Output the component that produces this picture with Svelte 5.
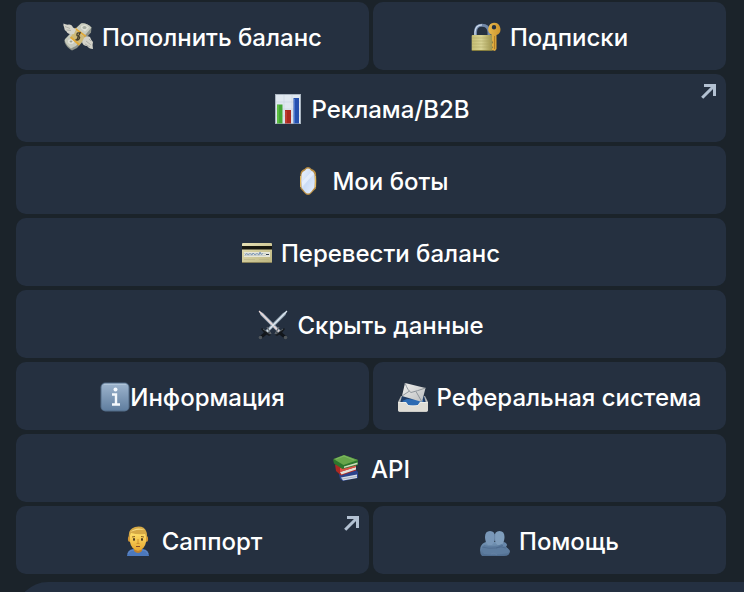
<script lang="ts">
  type KeyboardButton = {
    icon: string;
    text: string;
    href?: string;
    tight?: boolean;
  };

  const rows: KeyboardButton[][] = [
    [
      { icon: 'money', text: 'Пополнить баланс' },
      { icon: 'lock', text: 'Подписки' }
    ],
    [{ icon: 'chart', text: 'Реклама/B2B', href: '#ads' }],
    [{ icon: 'mirror', text: 'Мои боты' }],
    [{ icon: 'card', text: 'Перевести баланс' }],
    [{ icon: 'swords', text: 'Скрыть данные' }],
    [
      { icon: 'info', text: 'Информация', tight: true },
      { icon: 'mail', text: 'Реферальная система' }
    ],
    [{ icon: 'books', text: 'API' }],
    [
      { icon: 'man', text: 'Саппорт', href: '#support' },
      { icon: 'people', text: 'Помощь' }
    ]
  ];
</script>

<!-- shared gradients for the emoji -->
<svg class="defs" width="0" height="0" aria-hidden="true">
  <defs>
    <linearGradient id="gold" x1="0" y1="0" x2="1" y2="0">
      <stop offset="0" stop-color="#c5bd72" />
      <stop offset="0.45" stop-color="#d8d394" />
      <stop offset="1" stop-color="#9c9148" />
    </linearGradient>
    <linearGradient id="key" x1="0" y1="0" x2="1" y2="0">
      <stop offset="0" stop-color="#e7b84c" />
      <stop offset="1" stop-color="#cf962d" />
    </linearGradient>
    <linearGradient id="glass" x1="0" y1="0" x2="1" y2="1">
      <stop offset="0" stop-color="#edf4ff" />
      <stop offset="0.5" stop-color="#cbdcf5" />
      <stop offset="1" stop-color="#e5efff" />
    </linearGradient>
    <linearGradient id="plastic" x1="0" y1="0" x2="1" y2="1">
      <stop offset="0" stop-color="#e5dfb4" />
      <stop offset="1" stop-color="#bdb57e" />
    </linearGradient>
    <linearGradient id="badge" x1="0" y1="0" x2="0" y2="1">
      <stop offset="0" stop-color="#9db4cd" />
      <stop offset="1" stop-color="#607e9f" />
    </linearGradient>
    <linearGradient id="paper" x1="0" y1="0" x2="1" y2="1">
      <stop offset="0" stop-color="#f0f0ee" />
      <stop offset="1" stop-color="#b9bbbd" />
    </linearGradient>
    <linearGradient id="face" x1="0" y1="0" x2="0" y2="1">
      <stop offset="0" stop-color="#ffdf69" />
      <stop offset="1" stop-color="#e5a52e" />
    </linearGradient>
    <linearGradient id="shadow" x1="0" y1="0" x2="0" y2="1">
      <stop offset="0" stop-color="#7393b4" />
      <stop offset="1" stop-color="#506d90" />
    </linearGradient>
  </defs>
</svg>

{#snippet emoji(name: string)}
  <svg class="emoji" viewBox="0 0 30 30" aria-hidden="true">
    {#if name === 'money'}
      <path d="M7 12 18 1.5Q23 .5 28.5 5.5L28 10.5 14 26 9 28.5Q3 25 1.5 20L2 17Z" fill="#8e938a" />
      <path d="M7 12 18 1.5Q23 .5 28.5 5.5L13 24Q10 25 8 26.5 3 23 1.5 18Z" fill="#c8cbbd" />
      <path d="m18 4 4-1.5 4 3-4 4-4-3Z" fill="#dedfd3" />
      <ellipse cx="21.5" cy="5.5" rx="2" ry="1.6" fill="#a6aca0" />
      <ellipse cx="8" cy="19.5" rx="3" ry="2.3" fill="#e4e5dc" />
      <ellipse cx="8" cy="19.5" rx="1.4" ry="1" fill="#9ba192" />
      <path d="m11 7.5 11.5 8-6 7.5L8 15Z" fill="#cdb978" />
      <path d="m12 6.5 11 8M7.5 15l9 8" stroke="#e2a936" stroke-width="1.7" />
      <path d="M17.5 11.5q-3-1.5-3.5.5t1.5 2.5.5 2.5-3.5.5M17.5 10l-4 8.5" fill="none" stroke="#423c2c" stroke-width="1.3" />
      <path d="M11 12Q5 13 3.5 9.5 1 8 1 5 0 3 .5 1.5 3 3 6 2.5q3 0 4 3l3 1.5Z" fill="#d5d4ca" />
      <path d="m2 4.5 5 2M3.5 8 8 8.5" stroke="#a6a79f" stroke-width=".8" />
      <path d="M21 16q3-3 6-1 1 3 3 5-1 3 0 7-4 0-6-3-4 0-5-4Z" fill="#d3d2c8" />
      <path d="m23 19 5 4m-2-6 2 2m-6 3 5 3" stroke="#a3a59e" stroke-width=".8" />
    {:else if name === 'lock'}
      <path d="M4.5 15V10Q4.5 3.2 11 3.2T18 10v5" fill="none" stroke="#7187a8" stroke-width="3" />
      <path d="M4 14V10Q4.5 3 11 2.8" fill="none" stroke="#cbd9eb" stroke-width="1.3" />
      <rect x=".7" y="13" width="21" height="16" rx="1" fill="url(#gold)" />
      <path d="M1 16h20M1 19h20M1 22h20M1 25h20" stroke="#aaa262" stroke-width=".5" />
      <path d="M1 28.5h20" stroke="#857d3e" />
      <path d="M23 .8a6.4 6.4 0 0 1 2.5 12.3V27L24 29l-3-1v-1.5l1-1-1-1.5V22l1-1.5-1-2V13A6.4 6.4 0 0 1 23 .8Zm0 2.2a2.2 2.2 0 1 0 0 4.4A2.2 2.2 0 0 0 23 3Z" fill="url(#key)" fill-rule="evenodd" />
      <path d="M23.5 14v13" stroke="#aa731f" stroke-width=".8" />
    {:else if name === 'chart'}
      <rect x="2" width="26" height="30" fill="#aab5c1" />
      <rect x="3" y="1" width="24" height="28" fill="#e0e8f0" />
      <path d="M11 1v28M19 1v28M3 8h24M3 15h24M3 22h24" stroke="#cbd5e0" stroke-width=".6" />
      <rect x="4" y="10.5" width="5.5" height="19" fill="#43a735" />
      <rect x="12" y="16" width="6" height="13.5" fill="#ab281f" />
      <rect x="20.5" y="4" width="5.5" height="25.5" fill="#2550ae" />
      <path d="M5 11v18" stroke="#76d051" />
      <path d="M13 17v12" stroke="#cd5045" />
      <path d="M21.5 5v24" stroke="#4c78cf" />
    {:else if name === 'mirror'}
      <path d="M15 1q2 0 3.500 2 4 1 4.500 4.500.8 7.500 0 15Q21 24 18.500 27 17 29 15 29t-3.500-2Q9 24 7.500 22.500q-.8-7.500 0-15Q8 4 11.500 3 13 1 15 1Z" fill="#b98d42" />
      <path d="M15 2.500q2 0 3 2 3 1 3.500 4 .6 6.500 0 13L18 26q-1.500 1.500-3 1.500T12 26l-3.500-4.500q-.6-6.500 0-13Q9 5.500 12 4.500q1-2 3-2Z" fill="url(#glass)" />
      <path d="m9 16 10-11 2 3L9 21Z" fill="#f4f8ff" opacity=".55" />
      <path d="M7.5 10v11M22.5 10v11" stroke="#e5b95c" />
    {:else if name === 'card'}
      <rect y="5" width="30" height="20" rx="1" fill="url(#plastic)" />
      <path d="M0 8h30v3.5H0Z" fill="#17170f" />
      <rect x="2" y="14" width="26" height="5" fill="#e6e6da" />
      <path d="M2 15.5h22M2 17.5h22" stroke="#b8c1be" stroke-width=".6" />
      <path d="m3 17 2-1.5 1 1.5 2-1.5 2 1.5 1-2 2 2 2-1.5 2 1.5 1-3 1 2.5 2-1" fill="none" stroke="#7590b5" stroke-width=".9" />
      <path d="M24 16.5h3" stroke="#354052" />
      <path d="M0 24.5h30" stroke="#89825a" />
      <path d="M2 21.5h11m4 0h10" stroke="#b3ac82" stroke-width=".5" />
    {:else if name === 'swords'}
      <path d="m1 1 4 2 18 18-2.5 2L2.5 5Z" fill="#a7b5c4" />
      <path d="m29 1-4 2L7 21l2.5 2L27.5 5Z" fill="#97a6b5" />
      <path d="m1 1 20.5 21" stroke="#f0dbd9" stroke-width="1.1" />
      <path d="M29 1 8.5 22" stroke="#dfeaf2" stroke-width="1.1" />
      <path d="m9 17 4 7m8-7-4 7" stroke="#666b70" stroke-width="1.2" />
      <path d="m4 18 9 7-2 1-5-3-3-4Z" fill="#171b20" />
      <path d="m26 18-9 7 2 1 5-3 3-4Z" fill="#171b20" />
      <path d="m8 23-5.5 4.5M22 23l5.5 4.5" stroke="#12161b" stroke-width="3" />
      <circle cx="2.5" cy="27.5" r="1.8" fill="#50565b" />
      <circle cx="27.5" cy="27.5" r="1.8" fill="#50565b" />
      <path d="m5 19 7 5m13-5-7 5" stroke="#777c80" stroke-width=".7" />
    {:else if name === 'info'}
      <rect x=".5" y=".5" width="29" height="29" rx="5" fill="#526b86" />
      <rect x="1.5" y="1.5" width="27" height="27" rx="4" fill="url(#badge)" />
      <path d="M4 2.3h22" stroke="#bdcee0" stroke-width=".8" />
      <circle cx="15.5" cy="7.5" r="2" fill="#f4f8fc" />
      <path d="M12 12.5h4v10M12 22.5h8" fill="none" stroke="#f4f8fc" stroke-width="2.4" />
    {:else if name === 'mail'}
      <path d="M3 14h24l3 6v8q0 1.700-1.700 1.700H1.700Q0 29.700 0 28v-8Z" fill="#b6b8b8" />
      <path d="m4 14h22l2 7H2Z" fill="#203c65" />
      <path d="m4 19 5-2 16 1 1 3-7 3h-8Z" fill="#2d6bb3" />
      <path d="M7 1 27.500 6 24 20 4 14Z" fill="url(#paper)" />
      <path d="M7 1q3 8 6 9.500Q19 9 27.500 6M4 14l7.500-5M24 20l-6-10.500" fill="none" stroke="#888f95" stroke-width=".9" />
      <path d="M0 20h8l2 3q5 1 10 0l2-3h8v8q0 1.700-1.700 1.700H1.700Q0 29.700 0 28Z" fill="#dfddd6" />
      <path d="M.5 20.500H8l2 3q5 1 10 0l2-3h7.500" fill="none" stroke="#f4f3ef" stroke-width=".7" />
    {:else if name === 'books'}
      <path d="m7 20 16-5 3 3v6L11 27l-3-2Z" fill="#2b438c" />
      <path d="m9 23.5 16-3v3.5l-14 2.5Z" fill="#d7dce5" />
      <path d="m10 25 15-2.5" stroke="#8792ac" stroke-width=".6" />
      <path d="M3 10.5 24 8v8.5L9 21.5 4 17Z" fill="#ad2923" />
      <path d="m8 18 16-5v2.5L9.5 20.5Z" fill="#e3dfd7" />
      <path d="m8 14 16-4v3L8 18Z" fill="#db5246" />
      <path d="M1 5.5 12 1l14 5v5L10.5 15 2 9.5Z" fill="#2d762d" />
      <path d="M1.5 5 12 1l14 5-14.5 5Z" fill="#67a54a" />
      <path d="m12 12.5 13.5-4v1.8L12 14Z" fill="#cfdcbf" />
      <path d="m4 5 8-3 10 4" fill="none" stroke="#8abf6d" stroke-width=".7" />
    {:else if name === 'man'}
      <path d="M4 30q0-6 6-7h10q6 1 6 7Z" fill="#4b78bd" />
      <path d="M5 28q1-4 6-4h8q5 0 6 4" fill="none" stroke="#6288c6" />
      <path d="M11 21h8v4q-4 4-8 0Z" fill="#bf812b" />
      <ellipse cx="6.3" cy="13" rx="1.4" ry="3" fill="#d69a36" />
      <ellipse cx="23.7" cy="13" rx="1.4" ry="3" fill="#d69a36" />
      <path d="M7 7h16v9q-1 7-8 9-7-2-8-9Z" fill="url(#face)" />
      <path d="M6 12Q4.5 3 12 1q9-2 11.5 5 1 3 0 6L22 8q-7 1-14-1Z" fill="#d6a946" />
      <path d="M7 6q7-6 15-2-7-1-12 1Z" fill="#f8db83" />
      <path d="m9 11 3-.5m6 0 3 .5" stroke="#896025" />
      <ellipse cx="11" cy="13.5" rx="1" ry="1.4" fill="#48371e" />
      <ellipse cx="19" cy="13.5" rx="1" ry="1.4" fill="#48371e" />
      <path d="M15 13v4m-1.5.5h3" stroke="#c4872a" stroke-width=".8" />
      <path d="M13 20.5h4" fill="none" stroke="#874d28" />
    {:else if name === 'people'}
      <path d="M6 16Q2 17 .5 21L0 24q0 4 2 6h22q6 0 6-5-1-2-4-4l1-2q-1-3-5-3Z" fill="url(#shadow)" />
      <path d="M10 5q5 0 5 6 0 5-3 8H8q-3-3-3-8 0-6 5-6Z" fill="#7997b8" />
      <path d="M19.5 5q5 0 5 6 0 5-3 8h-4q-3-3-3-8 0-6 5-6Z" fill="#7f9dbc" />
      <path d="M4 19q10 3 18-1l4 3q4 3 2 6-12 3-24 1-4-4 0-9Z" fill="#5d7c9f" />
      <path d="M2 21q7 2 14 1l8-3M16 22l5-1 5 1" fill="none" stroke="#4c698c" stroke-width=".7" />
      <path d="M14.7 8v7M11 28l3-1 3 2" fill="none" stroke="#6482a3" stroke-width=".8" />
      <circle cx="24.5" cy="18.5" r="2" fill="#6787aa" />
    {/if}
  </svg>
{/snippet}

{#snippet content(button: KeyboardButton)}
  <span class="label" class:tight={button.tight}>
    {@render emoji(button.icon)}
    <span class="text">{button.text}</span>
  </span>
{/snippet}

<main>
  <div class="keyboard">
    {#each rows as row}
      <div class="row">
        {#each row as button}
          {#if button.href}
            <a class="key" href={button.href}>
              {@render content(button)}
              <svg class="arrow" viewBox="0 0 15 15" aria-hidden="true">
                <path d="M3 1.5h10.5V12M13 2 1.2 13.8" />
              </svg>
            </a>
          {:else}
            <button class="key" type="button">
              {@render content(button)}
            </button>
          {/if}
        {/each}
      </div>
    {/each}
  </div>
  <div class="next-message"></div>
</main>

<style>
  :global(body) {
    background: #1b232a;
  }

  main {
    display: flex;
    flex-direction: column;
    gap: 8px;
    height: 100vh;
    overflow: hidden;
    box-sizing: border-box;
    padding: 2px 0 0 16px;
    font-family: Inter, 'Noto Sans', sans-serif;
  }

  .defs {
    position: absolute;
  }

  .keyboard {
    display: flex;
    flex-direction: column;
    flex-shrink: 0;
    gap: 4px;
    margin-right: 18px;
  }

  .row {
    display: flex;
    gap: 4px;
  }

  .key {
    position: relative;
    display: flex;
    flex: 1 1 0;
    align-items: center;
    justify-content: center;
    box-sizing: border-box;
    min-width: 0;
    height: 68px;
    padding: 2px 8px 0;
    border: 0;
    border-radius: 10px;
    background: #253040;
    color: #fff;
    font-family: inherit;
    font-size: 24px;
    font-weight: 500;
    line-height: 30px;
    text-decoration: none;
    white-space: nowrap;
    cursor: pointer;
  }

  .key:hover {
    background: #2a3647;
  }

  .label {
    display: flex;
    align-items: center;
    gap: 9px;
  }

  .label.tight {
    gap: 0;
  }

  .text {
    padding-top: 2px;
  }

  .emoji {
    flex: none;
    width: 30px;
    height: 30px;
  }

  .arrow {
    position: absolute;
    top: 10px;
    right: 10px;
    width: 15px;
    height: 15px;
    fill: none;
    stroke: #b3c1d2;
    stroke-width: 3;
  }

  .next-message {
    flex: none;
    height: 68px;
    border-top-left-radius: 32px;
    background: #243041;
  }
</style>
